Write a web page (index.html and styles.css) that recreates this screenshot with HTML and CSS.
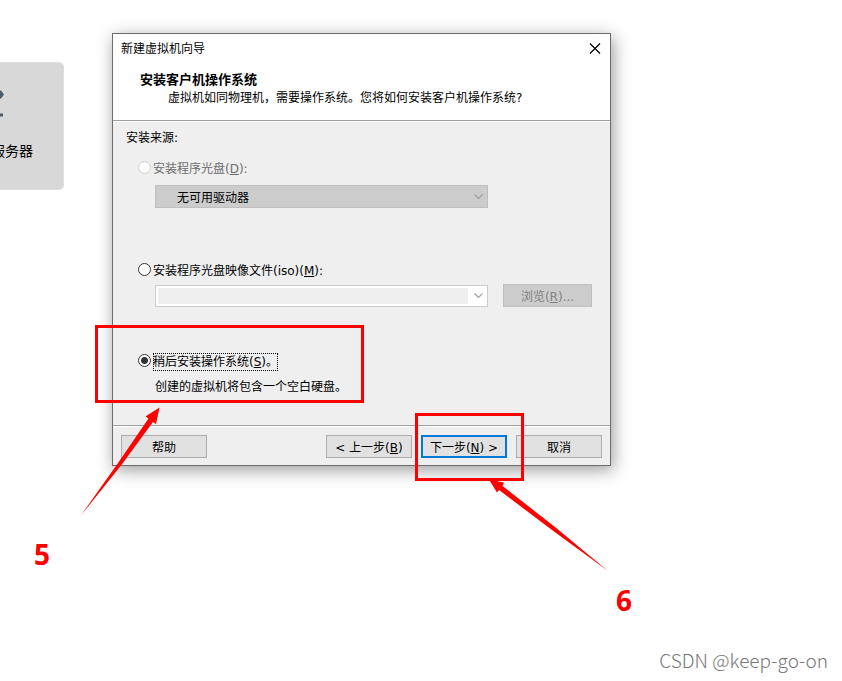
FILE: index.html
```html
<!DOCTYPE html>
<html lang="zh-CN">

<head>
  <meta charset="UTF-8">
  <meta name="viewport" content="width=device-width, initial-scale=1.0">
  <link rel="stylesheet" href="styles.css">
  <title>新建虚拟机向导</title>
</head>

<body>

  <div class="desktop">
    <div class="tile">
      <svg class="tile-icon" width="5" height="30" viewBox="0 0 5 30">
        <path d="M0 2.500 L1 2.500 L4 6.500 L1 10.500 L0 10.500 Z M0 25.500 H3 V28.500 H0 Z" fill="#4a5b69"/>
      </svg>
      <span class="tile-label">服务器</span>
    </div>

    <form class="wizard">
      <header class="wizard-header">
        <div class="titlebar">
          <span>新建虚拟机向导</span>
          <button type="button" class="close-btn" aria-label="关闭">
            <svg width="12" height="12" viewBox="0 0 12 12">
              <path d="M1 0.500 L11 10.500 M11 0.500 L1 10.500" fill="none" stroke="#000" stroke-width="1.2"/>
            </svg>
          </button>
        </div>
        <h1>安装客户机操作系统</h1>
        <p>虚拟机如同物理机，需要操作系统。您将如何安装客户机操作系统?</p>
      </header>

      <main class="wizard-body">
        <div class="source">安装来源:</div>

        <div class="option disabled">
          <input type="radio" name="source" id="disc" disabled>
          <label for="disc">安装程序光盘(<u>D</u>):</label>
        </div>
        <div class="fields">
          <div class="combo">
            <select class="drive" aria-label="驱动器" disabled>
              <option>无可用驱动器</option>
            </select>
            <svg width="9" height="6" viewBox="0 0 9 6">
              <path d="M0.5 0.5 L4.5 4.5 L8.5 0.5" fill="none" stroke="#a0a0a0" stroke-width="1.2"/>
            </svg>
          </div>
        </div>

        <div class="option iso-option">
          <input type="radio" name="source" id="iso">
          <label for="iso">安装程序光盘映像文件(iso)(<u>M</u>):</label>
        </div>
        <div class="fields">
          <div class="combo">
            <select class="iso-path" aria-label="映像文件" disabled></select>
            <svg width="9" height="6" viewBox="0 0 9 6">
              <path d="M0.5 0.5 L4.5 4.5 L8.5 0.5" fill="none" stroke="#a0a0a0" stroke-width="1.2"/>
            </svg>
          </div>
          <button type="button" class="btn" disabled>浏览(<u>R</u>)...</button>
        </div>

        <div class="option later-option">
          <input type="radio" name="source" id="later" checked>
          <label for="later" class="focused">稍后安装操作系统(<u>S</u>)。</label>
        </div>
        <p class="hint">创建的虚拟机将包含一个空白硬盘。</p>
      </main>

      <footer class="wizard-footer">
        <button type="button" class="btn help-btn">帮助</button>
        <button type="button" class="btn">&lt; 上一步(<u>B</u>)</button>
        <button type="submit" class="btn next-btn">下一步(<u>N</u>) &gt;</button>
        <button type="button" class="btn">取消</button>
      </footer>
    </form>

    <!-- red marks over the dialog -->
    <div class="mark mark-later"></div>
    <div class="mark mark-next"></div>
    <svg class="arrows" width="842" height="681" viewBox="0 0 842 681">
      <path d="M159.500 407.500 L156 424 L153 422 L121 465.500 L80.500 516 L118 463 L148.500 418.500 L145.500 416.500 Z" fill="#f00"/>
      <path d="M489 479.500 L504 482.500 L502.500 486 L555 527 L608 571 L552 530 L499 490 L497 492.500 Z" fill="#f00"/>
    </svg>
    <span class="step step-5">5</span>
    <span class="step step-6">6</span>

    <div class="watermark">CSDN @keep-go-on</div>
  </div>

</body>

</html>
```
FILE: styles.css
```css
* {
  box-sizing: border-box;
}

body {
  margin: 0;
  background-color: #fff;
  font-family: "DejaVu Sans", "Noto Sans CJK SC", sans-serif;
  font-size: 12px;
  line-height: 18px;
  color: #000;
}

h1,
p {
  margin: 0;
}

button,
select {
  font: inherit;
  color: inherit;
}

.desktop {
  position: relative;
  min-height: 100vh;
  overflow: hidden;
}

.tile {
  position: absolute;
  left: 0;
  top: 62px;
  width: 64px;
  height: 128px;
  display: flex;
  flex-direction: column;
  justify-content: space-between;
  padding: 25px 30px 29px 0;
  background-color: #d8d8d8;
  border: 1px solid #dedede;
  border-left: none;
  border-radius: 0 5px 5px 0;
}

.tile-label {
  align-self: flex-end;
  font-size: 14px;
  white-space: nowrap;
}

/* dialog */
.wizard {
  position: absolute;
  left: 112px;
  top: 33px;
  width: 499px;
  background-color: #efefef;
  border: 1px solid #6d6d6d;
  box-shadow: 2px 4px 16px rgba(0, 0, 0, 0.4);
}

.wizard-header {
  padding-bottom: 13px;
  background-color: #fff;
  border-bottom: 1px solid #a0a0a0;
}

.titlebar {
  display: flex;
  justify-content: space-between;
  align-items: center;
  height: 29px;
  margin-bottom: 8px;
  padding: 0 9px 0 8px;
}

.close-btn {
  display: flex;
  padding: 0;
  background: none;
  border: none;
}

.wizard-header h1 {
  padding-left: 27px;
  font-size: 13px;
  font-weight: bold;
  line-height: 18px;
}

.wizard-header p {
  padding-left: 55px;
}

.wizard-body {
  padding: 7px 18px 29px 13px;
  border-top: 1px solid #fff;
}

.option {
  display: flex;
  align-items: flex-start;
  gap: 2px;
  margin-top: 13px;
  padding-left: 12px;
}

.option.disabled {
  margin-bottom: 7px;
  color: #6d6d6d;
}

.iso-option {
  margin-top: 54px;
  margin-bottom: 4px;
}

.later-option {
  margin-top: 46px;
}

.option input {
  appearance: none;
  width: 13px;
  height: 13px;
  margin: 1px 0 0;
  background-color: #fff;
  border: 1px solid #333;
  border-radius: 50%;
}

.option input:checked {
  background-image: radial-gradient(circle, #333 3px, transparent 4px);
}

.option input:disabled {
  border-color: #ccc;
}

.focused {
  outline: 1px dotted #000;
  outline-offset: -1px;
}

.hint {
  margin-top: 7px;
  padding-left: 29px;
}

.fields {
  display: grid;
  grid-template-columns: 1fr 89px;
  align-items: center;
  gap: 15px;
  padding-left: 29px;
}

.combo {
  display: grid;
  align-items: center;
}

.combo > * {
  grid-area: 1 / 1;
}

.combo svg {
  justify-self: end;
  margin-right: 5px;
}

.combo select {
  appearance: none;
  width: 100%;
  border-radius: 0;
  opacity: 1;
}

.drive {
  height: 23px;
  padding: 2px 21px 0;
  background-color: #ccc;
  border: 1px solid #bfbfbf;
}

.iso-path {
  height: 22px;
  padding: 2px 19px 2px 2px;
  background: linear-gradient(#efefef, #efefef) content-box, #fff;
  border: 1px solid #ccc;
}

.btn {
  height: 23px;
  padding: 2px 0 0;
  background-color: #e1e1e1;
  border: 1px solid #adadad;
  white-space: pre;
}

.btn:disabled {
  background-color: #ccc;
  border-color: #bfbfbf;
  color: #838383;
}

.next-btn {
  border: 2px solid #0078d7;
}

.wizard-footer {
  display: flex;
  gap: 9px;
  padding: 9px 8px 7px;
  border-top: 1px solid #a0a0a0;
  box-shadow: inset 0 1px #fff;
}

.wizard-footer .btn {
  width: 86px;
}

.help-btn {
  margin-right: auto;
}

/* marks */
.mark {
  position: absolute;
  border: 3px solid #f00;
}

.mark-later {
  left: 95px;
  top: 325px;
  width: 269px;
  height: 78px;
}

.mark-next {
  left: 415px;
  top: 413px;
  width: 109px;
  height: 68px;
}

.arrows {
  position: absolute;
  left: 0;
  top: 0;
  pointer-events: none;
}

.step {
  position: absolute;
  font-family: "Open Sans", "Noto Sans", sans-serif;
  font-size: 28px;
  font-weight: bold;
  line-height: 36px;
  color: #f00;
}

.step-5 {
  left: 34px;
  top: 536px;
}

.step-6 {
  left: 616px;
  top: 582px;
}

.watermark {
  position: absolute;
  right: 14px;
  bottom: 9px;
  font-family: "Noto Sans CJK SC", sans-serif;
  font-size: 19px;
  font-weight: 300;
  line-height: 24px;
  color: #777;
}
```
